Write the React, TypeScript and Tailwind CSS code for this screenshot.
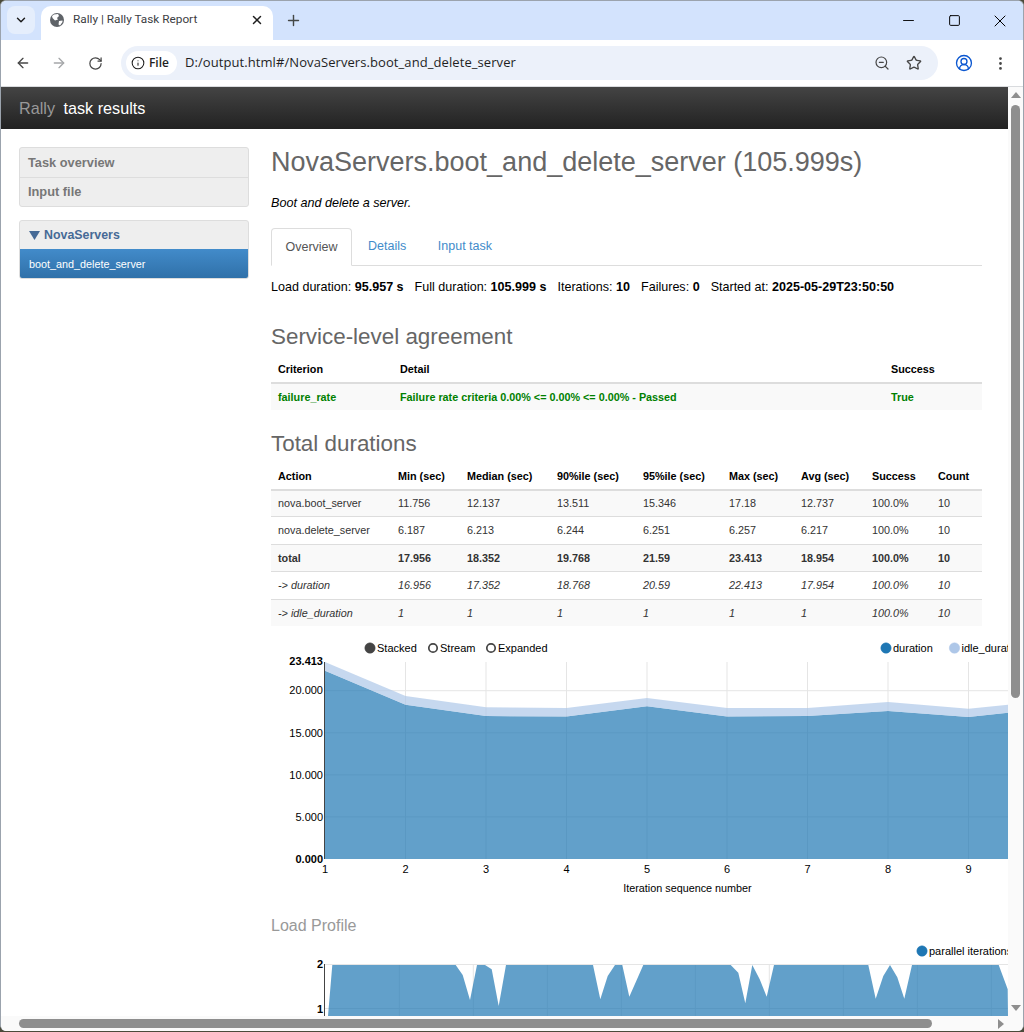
import { ArrowLeft, ArrowRight, RotateCw, ZoomOut, Star, EllipsisVertical, X, Plus, Minus, Square, ChevronDown, Info, CircleUserRound } from "lucide-react";

const durHeaders = ["Action", "Min (sec)", "Median (sec)", "90%ile (sec)", "95%ile (sec)", "Max (sec)", "Avg (sec)", "Success", "Count"];
const durWidths = ["w-[120px]", "w-[69px]", "w-[90px]", "w-[86px]", "w-[86px]", "w-[72px]", "w-[71px]", "w-[66px]", "w-[51px]"];
const durRows = [
  { c: "", s: "bg-[#f9f9f9]", v: ["nova.boot_server", "11.756", "12.137", "13.511", "15.346", "17.18", "12.737", "100.0%", "10"] },
  { c: "", s: "", v: ["nova.delete_server", "6.187", "6.213", "6.244", "6.251", "6.257", "6.217", "100.0%", "10"] },
  { c: "font-bold", s: "bg-[#f9f9f9]", v: ["total", "17.956", "18.352", "19.768", "21.59", "23.413", "18.954", "100.0%", "10"] },
  { c: "italic", s: "", v: ["-> duration", "16.956", "17.352", "18.768", "20.59", "22.413", "17.954", "100.0%", "10"] },
  { c: "italic", s: "bg-[#f9f9f9]", v: ["-> idle_duration", "1", "1", "1", "1", "1", "1", "100.0%", "10"] },
];

const xs = [54, 134.5, 215, 295.5, 376, 456, 536.5, 617, 697.5];
const top = [[54, 32], [134.5, 66], [215, 77.3], [295.5, 78], [376, 68], [456, 78], [536.5, 78], [617, 72], [697.5, 78.7], [737, 74.7]];
const low = [[54, 40.7], [134.5, 74.7], [215, 86], [295.5, 86.5], [376, 76.3], [456, 86.5], [536.5, 86], [617, 81], [697.5, 87], [737, 82.7]];
const pts = (a: number[][]) => a.map((p) => p.join(",")).join(" ");

const load = [
  [57, 51], [61.3, 0], [184.7, 0], [191.7, 10], [199, 35], [206, 0], [214, 0], [220.7, 4.3], [227.7, 41], [235, 0],
  [322, 0], [329.3, 34.3], [336.7, 11], [344, 0], [351.3, 0], [358.3, 31.7], [365.7, 15], [372.3, 0],
  [459.7, 0], [467.3, 7.7], [474.3, 38.3], [481.3, 0], [488.7, 14.3], [495.7, 31.7], [503, 0],
  [597.3, 0], [604.7, 33.7], [612.3, 11], [619, 0], [626.3, 12.3], [633.3, 33.7], [641, 0],
  [727.7, 0], [736.7, 24.3], [737, 51],
];
const loadGrid = [128.3, 202.3, 276.3, 350.3, 424.3, 498.3, 572.3, 646.3, 720.3];

const fontChart = { fontFamily: '"Liberation Sans", Arial, sans-serif' };

function Legend({ x, y, label, color, filled = true }: { x: number; y: number; label: string; color: string; filled?: boolean }) {
  return (
    <g>
      <circle cx={x} cy={y} r={filled ? 5.2 : 4.2} fill={filled ? color : "#fff"} stroke={color} strokeWidth={filled ? 0.5 : 1.7} />
      <text x={x + 7} y={y + 4} fontSize="11" fill="#000">{label}</text>
    </g>
  );
}

function DurationChart() {
  return (
    <svg width="737" height="269" className="block" style={fontChart}>
      <Legend x={99} y={18} label="Stacked" color="#444" />
      <Legend x={162} y={18} label="Stream" color="#444" filled={false} />
      <Legend x={220} y={18} label="Expanded" color="#444" filled={false} />
      <Legend x={615} y={18} label="duration" color="#1f77b4" />
      <Legend x={683.5} y={18} label="idle_duration" color="#aec7e8" />
      {[60.7, 102.8, 144.9, 186.9].map((y) => (
        <line key={y} x1="54" x2="737" y1={y} y2={y} stroke="#e5e5e5" />
      ))}
      {xs.slice(1).map((x) => (
        <line key={x} x1={x} x2={x} y1="32" y2="229" stroke="#e5e5e5" />
      ))}
      <polygon points={`${pts(low)} 737,229 54,229`} fill="#1f77b4" fillOpacity="0.7" />
      <polygon points={`${pts(top)} ${pts([...low].reverse())}`} fill="#aec7e8" fillOpacity="0.7" />
      <line x1="53.5" x2="53.5" y1="32" y2="229" stroke="#444" />
      {[["23.413", 35, true], ["20.000", 64, false], ["15.000", 107, false], ["10.000", 149, false], ["5.000", 191, false], ["0.000", 233, true]].map(([t, y, b]) => (
        <text key={String(t)} x="52" y={Number(y)} textAnchor="end" fontSize="11" fontWeight={b ? "bold" : "normal"} fill="#000">{t}</text>
      ))}
      {xs.map((x, i) => (
        <text key={x} x={x} y="243" textAnchor="middle" fontSize="11" fill="#000">{i + 1}</text>
      ))}
      <text x="416.5" y="262" textAnchor="middle" fontSize="10.8" fill="#000">Iteration sequence number</text>
    </svg>
  );
}

function LoadChart() {
  return (
    <svg width="737" height="76" className="block" style={fontChart}>
      <Legend x={651} y={9} label="parallel iterations" color="#1f77b4" />
      <line x1="54" x2="737" y1="22.5" y2="22.5" stroke="#e5e5e5" />
      <line x1="54" x2="737" y1="66.5" y2="66.5" stroke="#e5e5e5" />
      {loadGrid.map((x) => (
        <line key={x} x1={x} x2={x} y1="22" y2="74" stroke="#e5e5e5" />
      ))}
      <g transform="translate(0,23)">
        <polygon points={pts(load)} fill="#1f77b4" fillOpacity="0.7" />
      </g>
      <line x1="53.5" x2="53.5" y1="22" y2="74" stroke="#444" />
      <text x="52" y="26" textAnchor="end" fontSize="11" fontWeight="bold" fill="#000">2</text>
      <text x="52" y="71" textAnchor="end" fontSize="11" fontWeight="bold" fill="#000">1</text>
    </svg>
  );
}

function Stat({ label, value }: { label: string; value: string }) {
  return (
    <span className="mr-[11px]">
      {label} <b>{value}</b>
    </span>
  );
}

export default function App() {
  return (
    <div className="w-[1024px] h-[1032px] flex flex-col overflow-hidden bg-[#4a4a3a] pb-[1px] font-['Liberation_Sans',Arial,sans-serif]">
      <div className="flex-1 min-h-0 flex flex-col overflow-hidden bg-white border border-[#9ba3ad] border-b-0 rounded-[6px]">
        {/* tab strip */}
        <div className="h-[39px] shrink-0 bg-[#d3e3fd] flex items-end pl-[6px] font-['Roboto',sans-serif]">
          <div className="w-[28px] h-[28px] mb-[6px] rounded-[8px] bg-[#e5eefc] flex items-center justify-center mr-[6px]">
            <ChevronDown size={14} strokeWidth={2.5} className="text-[#1f1f1f]" />
          </div>
          <div className="w-[232px] h-[34px] bg-white rounded-t-[10px] flex items-center pl-[8px] pr-[9px] pb-[6px]">
            <svg width="16" height="16" viewBox="0 0 16 16" className="shrink-0">
              <circle cx="8" cy="8" r="7" fill="#5f6368" />
              <path d="M5 2.5 L9 2 L10 4 L8 6 L9 7.5 L6 8.5 L3.5 6 L3 4Z M10 9 L13.5 8.5 L13.5 10 L11 13.5 L9.5 12.5Z" fill="#fff" />
            </svg>
            <span className="ml-[8px] text-[11.8px] text-[#3c4043] flex-1 truncate">Rally | Rally Task Report</span>
            <X size={14} strokeWidth={2.5} className="text-[#1f1f1f]" />
          </div>
          <Plus size={17} strokeWidth={2} className="text-[#444746] ml-[12px] mb-[11px]" />
          <div className="flex-1" />
          <div className="flex items-center self-start h-[39px]">
            <div className="w-[46px] flex justify-center"><Minus size={17} strokeWidth={1.3} className="text-black" /></div>
            <div className="w-[46px] flex justify-center"><Square size={13} strokeWidth={1.8} className="text-black" /></div>
            <div className="w-[46px] flex justify-center"><X size={20} strokeWidth={1.2} className="text-black" /></div>
          </div>
        </div>
        {/* toolbar */}
        <div className="h-[47px] shrink-0 bg-white rounded-t-[8px] flex items-center border-b border-[#d9dbde] pl-[14px] pr-[14px] font-['Open_Sans',sans-serif]">
          <ArrowLeft size={16} strokeWidth={2} className="text-[#474747]" />
          <ArrowRight size={16} strokeWidth={2} className="text-[#a5a7a9] ml-[20px]" />
          <RotateCw size={15} strokeWidth={2} className="text-[#474747] ml-[21px]" />
          <div className="ml-[18px] w-[819px] h-[34px] rounded-full bg-[#ecf1fa] flex items-center pl-[5px] pr-[16px]">
            <div className="h-[24px] w-[51px] rounded-full bg-white flex items-center pl-[5px] shrink-0">
              <Info size={14} strokeWidth={1.8} className="text-[#1f1f1f]" />
              <span className="ml-[4px] text-[12px] font-semibold text-[#1f1f1f]">File</span>
            </div>
            <span className="ml-[8px] text-[13px] text-[#1f1f1f] flex-1 tracking-[0.08px]">D:/output.html#/NovaServers.boot_and_delete_server</span>
            <ZoomOut size={16} strokeWidth={1.8} className="text-[#474747]" />
            <Star size={16} strokeWidth={2} className="text-[#474747] ml-[16px]" />
          </div>
          <CircleUserRound size={18} strokeWidth={1.8} className="text-[#0b57d0] ml-[17px]" />
          <EllipsisVertical size={17} strokeWidth={2} className="text-[#474747] ml-[19px]" />
        </div>
        {/* viewport */}
        <div className="flex-1 min-h-0 flex flex-col">
          <div className="flex-1 min-h-0 flex">
            <div className="w-[1007px] shrink-0 overflow-hidden bg-white">
              <div className="h-[42px] bg-gradient-to-b from-[#444444] to-[#222222] flex items-center pl-[18px] text-[16.2px]">
                <span className="text-[#999999]">Rally</span>
                <span className="text-white ml-[8.5px]">task results</span>
              </div>
              <div className="flex pl-[18px] pt-[18px]">
                {/* sidebar */}
                <div className="w-[230px] shrink-0">
                  <div className="rounded-[3px] border border-[#dddddd] bg-[#eeeeee] text-[12.8px] font-bold text-[#777777]">
                    <div className="h-[29px] pl-[8px] flex items-center">Task overview</div>
                    <div className="h-[29px] pl-[8px] flex items-center border-t border-[#dddddd]">Input file</div>
                  </div>
                  <div className="mt-[13px] rounded-[3px] border border-[#dddddd] bg-[#eeeeee] overflow-hidden">
                    <div className="h-[28px] pl-[9px] flex items-center text-[12.4px] font-bold text-[#466a96]">
                      <svg width="11" height="9" viewBox="0 0 11 9" className="mr-[4px] shrink-0"><polygon points="0,0 11,0 5.5,9" fill="#466a96" /></svg>
                      NovaServers
                    </div>
                    <div className="h-[29px] pl-[9px] pt-[1px] flex items-center text-[10.8px] font-medium text-white bg-gradient-to-b from-[#428bca] to-[#3071a9]">boot_and_delete_server</div>
                  </div>
                </div>
                {/* content */}
                <div className="ml-[22px] w-[737px] shrink-0">
                  <div className="w-[711px]">
                    <h1 className="text-[27px] leading-[30px] text-[#666666]">NovaServers.boot_and_delete_server (105.999s)</h1>
                    <p className="mt-[19px] text-[12.6px] italic leading-[14px] text-black">Boot and delete a server.</p>
                    <div className="mt-[18px] h-[38px] flex border-b border-[#dddddd] text-[12.5px]">
                      <div className="h-[38px] px-[13.5px] flex items-center border border-[#dddddd] border-b-white rounded-t-[4px] bg-white text-[#555555]">Overview</div>
                      <div className="h-[37px] ml-[2px] px-[14px] flex items-center text-[#428bca]">Details</div>
                      <div className="h-[37px] ml-[3.5px] px-[14px] flex items-center text-[#428bca]">Input task</div>
                    </div>
                    <div className="mt-[13px] text-[12.55px] leading-[16px] text-black whitespace-nowrap">
                      <Stat label="Load duration:" value="95.957 s" />
                      <Stat label="Full duration:" value="105.999 s" />
                      <Stat label="Iterations:" value="10" />
                      <Stat label="Failures:" value="0" />
                      <Stat label="Started at:" value="2025-05-29T23:50:50" />
                    </div>
                    <h2 className="mt-[28px] text-[22.4px] leading-[28px] text-[#666666]">Service-level agreement</h2>
                    <table className="mt-[5px] w-full table-fixed border-collapse text-[10.8px] text-black">
                      <thead>
                        <tr className="h-[27px] border-b-2 border-[#dddddd] font-bold text-left">
                          <th className="w-[122px] pl-[7px]">Criterion</th>
                          <th className="w-[491px] pl-[7px]">Detail</th>
                          <th className="pl-[7px]">Success</th>
                        </tr>
                      </thead>
                      <tbody>
                        <tr className="h-[27px] bg-[#f9f9f9] font-bold text-[#008000]">
                          <td className="pl-[7px]">failure_rate</td>
                          <td className="pl-[7px]">Failure rate criteria 0.00% &lt;= 0.00% &lt;= 0.00% - Passed</td>
                          <td className="pl-[7px]">True</td>
                        </tr>
                      </tbody>
                    </table>
                    <h2 className="mt-[20px] text-[22.4px] leading-[28px] text-[#666666]">Total durations</h2>
                    <table className="mt-[5px] w-full table-fixed border-collapse text-[10.8px] text-black">
                      <thead>
                        <tr className="h-[26.5px] border-b-2 border-[#dddddd] text-left">
                          {durHeaders.map((h, i) => (
                            <th key={h} className={`${durWidths[i]} pl-[7px] font-bold`}>{h}</th>
                          ))}
                        </tr>
                      </thead>
                      <tbody className="text-[#333333]">
                        {durRows.map((r) => (
                          <tr key={r.v[0]} className={`h-[27.4px] border-b border-[#dddddd] last:border-b-0 ${r.s} ${r.c}`}>
                            {r.v.map((v, i) => (
                              <td key={i} className="pl-[7px]">{v}</td>
                            ))}
                          </tr>
                        ))}
                      </tbody>
                    </table>
                  </div>
                  <div className="mt-[3.5px]"><DurationChart /></div>
                  <h3 className="mt-[17.5px] text-[16px] leading-[20px] text-[#999999]">Load Profile</h3>
                  <div className="mt-[5.5px] overflow-hidden"><LoadChart /></div>
                </div>
              </div>
            </div>
            {/* vertical scrollbar */}
            <div className="flex-1 bg-[#fafafa] flex flex-col items-center pt-[5px] pb-[5px]">
              <div className="w-0 h-0 border-x-[5px] border-x-transparent border-b-[6px] border-b-[#8e8e8e]" />
              <div className="mt-[7px] w-[9px] h-[593px] rounded-full bg-[#8e8e8e]" />
              <div className="flex-1" />
              <div className="w-0 h-0 border-x-[5px] border-x-transparent border-t-[6px] border-t-[#8e8e8e]" />
            </div>
          </div>
          {/* horizontal scrollbar */}
          <div className="h-[15px] shrink-0 bg-[#fafafa] flex items-center pl-[18px] pr-[19px]">
            <div className="w-[913px] h-[9px] rounded-full bg-[#8e8e8e]" />
            <div className="flex-1" />
            <div className="w-0 h-0 border-y-[5px] border-y-transparent border-l-[6px] border-l-[#8e8e8e]" />
          </div>
        </div>
      </div>
    </div>
  );
}
